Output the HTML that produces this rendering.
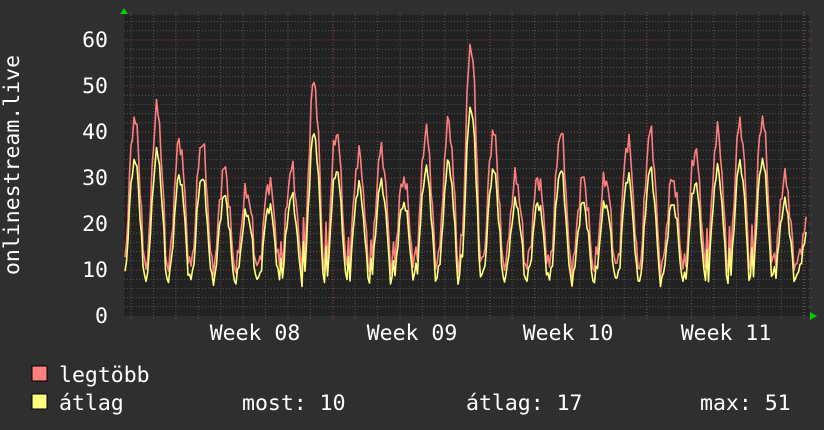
<!DOCTYPE html>
<html><head><meta charset="utf-8"><style>
html,body{margin:0;padding:0;background:#2f2f2f;width:824px;height:430px;overflow:hidden}
svg text{font-family:"DejaVu Sans Mono","Liberation Mono",monospace;fill:#fff}
</style></head><body>
<svg id="s" width="824" height="430" xmlns="http://www.w3.org/2000/svg">
<rect width="824" height="430" fill="#2f2f2f"/>
<rect x="124" y="15" width="685" height="301" fill="#222"/>
<g id="grid"></g>
<path id="mx" fill="none" stroke="#ff7f7f" stroke-width="1.6" stroke-linejoin="round"/>
<path id="av" fill="none" stroke="#ffff7f" stroke-width="1.6" stroke-linejoin="round"/>
<polygon points="120,14 128,14 124,8" fill="#0c0"/>
<polygon points="810,312 810,320 817,316" fill="#0c0"/>
<g font-size="21.5" text-anchor="end">
<text x="108" y="47">60</text><text x="108" y="93">50</text><text x="108" y="139">40</text>
<text x="108" y="185">30</text><text x="108" y="231">20</text><text x="108" y="277">10</text>
<text x="108" y="323">0</text>
</g>
<g font-size="21.5" text-anchor="middle">
<text x="255" y="340">Week 08</text><text x="412" y="340">Week 09</text>
<text x="568" y="340">Week 10</text><text x="726" y="340">Week 11</text>
</g>
<text font-size="21.5" transform="translate(19,165) rotate(-90)" text-anchor="middle">onlinestream.live</text>
<rect x="32" y="366" width="15" height="15" fill="#ff7f7f" stroke="#000" stroke-width="1"/>
<rect x="32" y="394" width="15" height="15" fill="#ffff7f" stroke="#000" stroke-width="1"/>
<g font-size="21.5">
<text x="59" y="382">legtöbb</text>
<text x="59" y="410">átlag</text>
<text x="242" y="410">most: 10</text>
<text x="466" y="410">átlag: 17</text>
<text x="700" y="410">max: 51</text>
</g>
</svg>
<script>
var g=document.getElementById('grid'),h='';
for(var v=2;v<=64;v+=2){var y=316-4.6*v;if(y<15)break;var red=v%10==0;
h+='<line x1="124" x2="812" y1="'+y+'" y2="'+y+'" stroke="'+(red?'#8a3a3a':'#555')+'" stroke-dasharray="1,2"/>';}
for(var i=0;i<31;i++){var x=131+i*22.42;if(x>809)break;
h+='<line y1="12" y2="319" x1="'+x+'" x2="'+x+'" stroke="#555" stroke-dasharray="1,2"/>';}
[176,333,490,647,805].forEach(function(x){h+='<line y1="12" y2="319" x1="'+x+'" x2="'+x+'" stroke="#8a3a3a" stroke-dasharray="1,2"/>';});
g.innerHTML=h;
var P=[43,45,38,38,32,27,29,32,51,40,35,36,30,40,42,59,40,30,30,40,30,30,38,40,30,36,40,42,43,30,20];
function f(x,a){var d=(x-124)/22.42,i=Math.floor(d),ph=d-i;if(i>30)i=30;var p=P[i];
var s=Math.pow(Math.max(0,Math.sin(Math.PI*(ph-0.05)/0.85)),1.3);
var s2=Math.pow(Math.max(0,Math.sin(Math.PI*(ph-0.5)/0.4)),2)*0.55;s=Math.max(s,s2);
var n=Math.sin(x*1.7)*1.5+Math.sin(x*0.93)*1.2;
var base=a?8:11,pk=a?(p*0.72+3):p;return base+(pk-base)*s+n*(a?0.6:1);}
function path(a){var d='';for(var x=125;x<=806;x+=1.5){var v=f(x,a);if(!a&&v<f(x,1))v=f(x,1)+1;d+=(d?'L':'M')+x.toFixed(1)+','+(316-4.6*v).toFixed(1);}return d;}
document.getElementById('mx').setAttribute('d',path(0));
document.getElementById('av').setAttribute('d',path(1));
</script>
</body></html>
